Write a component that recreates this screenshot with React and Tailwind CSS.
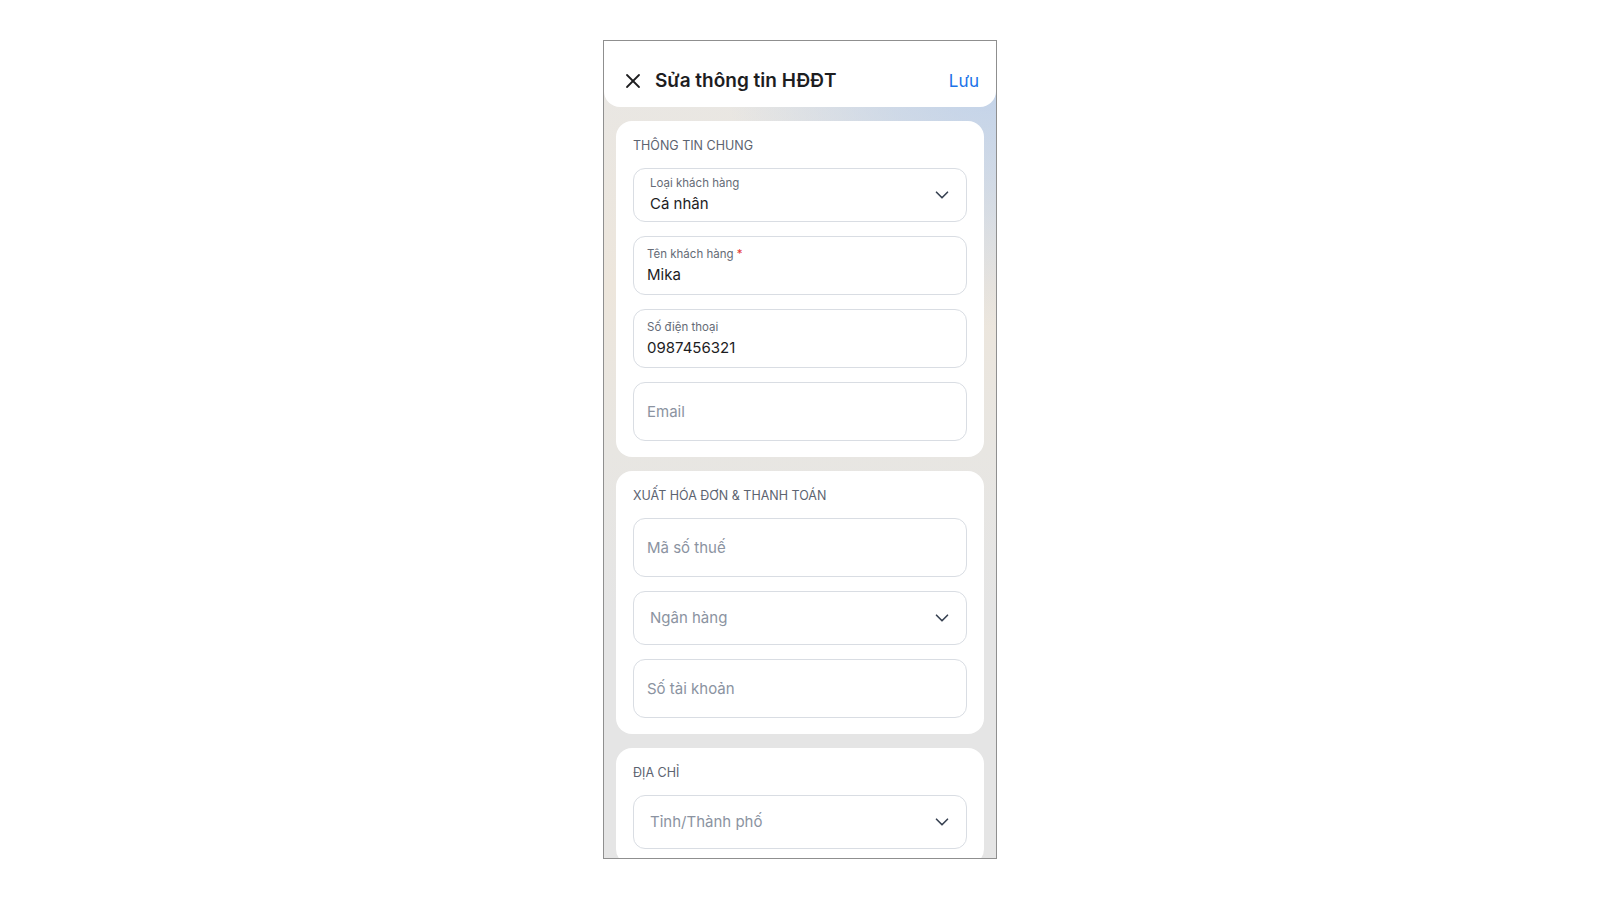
import React from 'react';
import { X, ChevronDown } from 'lucide-react';

function SectionTitle({ children }) {
  return (
    <h3 className="text-[12.5px] leading-5 font-normal text-[#5c6370] uppercase mb-3">{children}</h3>
  );
}

function SelectField({ label, value, placeholder }) {
  return (
    <div className="h-[54px] border border-[#d9dde3] rounded-xl flex items-center pl-4 pr-[13px]">
      <div className="flex-1 flex flex-col justify-center">
        {label && <span className="text-[11.5px] leading-4 text-[#656b76]">{label}</span>}
        {value ? (
          <span className="text-[15px] leading-[22px] text-[#1d1d1f] mt-0.5">{value}</span>
        ) : (
          <span className="text-[15px] leading-[22px] text-[#8b93a1]">{placeholder}</span>
        )}
      </div>
      <ChevronDown size={22} strokeWidth={1.8} className="text-[#374151]" />
    </div>
  );
}

function TextField({ label, value, placeholder, required }) {
  return (
    <div className="h-[59px] border border-[#d9dde3] rounded-xl flex flex-col justify-center pl-[13px] pr-4">
      {label && (
        <span className="text-[11.5px] leading-4 text-[#656b76]">
          {label}
          {required && <span className="text-[#e53935]"> *</span>}
        </span>
      )}
      {value ? (
        <span className="text-[15px] leading-[22px] text-[#1d1d1f] mt-0.5">{value}</span>
      ) : (
        <span className="text-[15px] leading-[22px] text-[#8b93a1]">{placeholder}</span>
      )}
    </div>
  );
}

function Card({ title, children }) {
  return (
    <section className="bg-white rounded-2xl px-[17px] pt-[15px] pb-4">
      <SectionTitle>{title}</SectionTitle>
      <div className="flex flex-col gap-[14px]">{children}</div>
    </section>
  );
}

export default function App() {
  return (
    <div className="min-h-screen bg-white flex justify-center pt-10 font-['Inter','Noto_Sans',sans-serif]">
      <div className="w-[394px] h-[819px] border border-[#8f8f8f] overflow-hidden bg-[#e6e6e5] bg-[radial-gradient(ellipse_70%_35%_at_100%_0%,#bdd0ea_0%,rgba(189,208,234,0.6)_45%,rgba(189,208,234,0)_100%),linear-gradient(180deg,#e8e7e5_0%,#ede6dc_30%,#e8e6e2_50%,#e5e5e5_70%)]">
        <header className="bg-white rounded-b-2xl pt-[26px] pb-3 pl-[17px] pr-[17px] flex items-center">
          <X size={24} strokeWidth={1.8} className="text-[#1d1d1f]" />
          <h1 className="ml-[10px] flex-1 text-[19px] leading-7 font-semibold text-[#1d1d1f]">Sửa thông tin HĐĐT</h1>
          <button className="text-[17px] leading-7 text-[#1a73e8]">Lưu</button>
        </header>

        <div className="px-3 pt-[14px] flex flex-col gap-[14px]">
          <Card title="Thông tin chung">
            <SelectField label="Loại khách hàng" value="Cá nhân" />
            <TextField label="Tên khách hàng" value="Mika" required />
            <TextField label="Số điện thoại" value="0987456321" />
            <TextField placeholder="Email" />
          </Card>

          <Card title="Xuất hóa đơn & thanh toán">
            <TextField placeholder="Mã số thuế" />
            <SelectField placeholder="Ngân hàng" />
            <TextField placeholder="Số tài khoản" />
          </Card>

          <Card title="Địa chỉ">
            <SelectField placeholder="Tỉnh/Thành phố" />
          </Card>
        </div>
      </div>
    </div>
  );
}
